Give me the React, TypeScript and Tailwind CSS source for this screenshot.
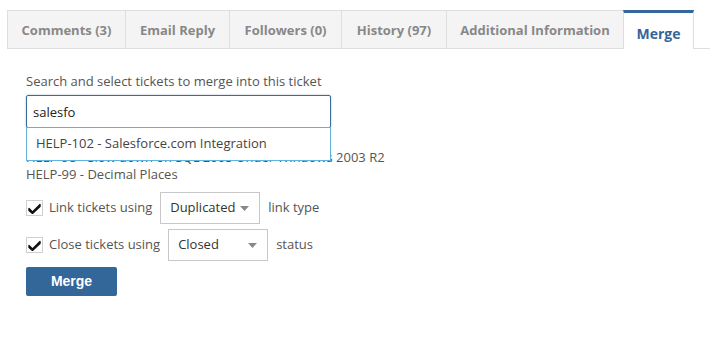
import { useState } from 'react';

const tabs = [
  { label: 'Comments (3)', w: 'w-[118px]' },
  { label: 'Email Reply', w: 'w-[104px]' },
  { label: 'Followers (0)', w: 'w-[112px]' },
  { label: 'History (97)', w: 'w-[105px]' },
  { label: 'Additional Information', w: 'w-[177px]' },
];

function Check() {
  return (
    <span className="w-[17px] h-[16px] border border-[#d0d0d0] bg-white flex items-center justify-center shrink-0">
      <svg width="13" height="11" viewBox="0 0 13 11">
        <path d="M1 5.5 L4.5 9 L12 1.5 L12 3.5 L4.5 10.5 L1 7.5 Z" fill="#111" stroke="#111" strokeWidth="1.4" strokeLinejoin="round" />
      </svg>
    </span>
  );
}

function Select({ value, w }: { value: string; w: string }) {
  return (
    <div className={`${w} h-[32px] border border-[#c8c8c8] bg-white flex items-center justify-between pl-[9px] pr-[10px] text-[#333]`}>
      <span>{value}</span>
      <svg width="9" height="5" viewBox="0 0 9 5">
        <path d="M0 0 L9 0 L4.5 5 Z" fill="#888" />
      </svg>
    </div>
  );
}

export default function App() {
  const [query, setQuery] = useState('salesfo');

  return (
    <div className="w-[710px] h-[341px] bg-white text-[13px] text-[#555]" style={{ fontFamily: '"Open Sans", "Noto Sans", sans-serif' }}>
      <div className="pt-[10px] pl-[7px] flex">
        {tabs.map((t) => (
          <div
            key={t.label}
            className={`${t.w} h-[39px] bg-[#f4f4f4] border-t border-l border-b border-[#dedede] flex items-center justify-center pt-[2px] font-bold text-[#888] text-[13px]`}
          >
            {t.label}
          </div>
        ))}
        <div className="w-[71px] h-[39px] bg-white border-t-[3px] border-t-[#336699] border-l border-r border-l-[#dedede] border-r-[#dedede] flex items-center justify-center pt-[4px] font-bold text-[#336699] text-[14px]">
          Merge
        </div>
        <div className="flex-1 h-[39px] border-b border-[#dedede]" />
      </div>

      <div className="pl-[26px] pt-[23px]">
        <div className="leading-[18px]">Search and select tickets to merge into this ticket</div>
        <div className="relative w-[305px] mt-[5px]">
          <input
            value={query}
            onChange={(e) => setQuery(e.target.value)}
            className="w-full h-[33px] border border-[#3d6a9c] rounded-[2px] px-[6px] text-[13px] text-[#222] outline-none shadow-[0_0_2px_rgba(61,106,156,0.5)]"
          />
          <div className="absolute left-0 top-[32px] w-full h-[34px] border border-[#5fb3dd] bg-white flex items-center pl-[9px] text-[#444]">
            HELP-102 - Salesforce.com Integration
          </div>
        </div>
        <div className="mt-[21px] leading-[17px] whitespace-nowrap">
          <div>HELP-98 - Slow down on SQL 2005 Under Windows 2003 R2</div>
          <div>HELP-99 - Decimal Places</div>
        </div>

        <div className="flex items-center gap-[6px] mt-[9px]">
          <Check />
          <span>Link tickets using</span>
          <span className="ml-[2px]"><Select value="Duplicated" w="w-[100px]" /></span>
          <span className="ml-[2px]">link type</span>
        </div>
        <div className="flex items-center gap-[6px] mt-[5px]">
          <Check />
          <span>Close tickets using</span>
          <span className="ml-[2px]"><Select value="Closed" w="w-[100px]" /></span>
          <span className="ml-[2px]">status</span>
        </div>

        <button
          className="mt-[6px] w-[91px] h-[29px] bg-[#336699] rounded-[2px] text-white font-bold text-[14px]"
          style={{ fontFamily: '"Liberation Sans", Arial, sans-serif' }}
        >
          Merge
        </button>
      </div>
    </div>
  );
}
